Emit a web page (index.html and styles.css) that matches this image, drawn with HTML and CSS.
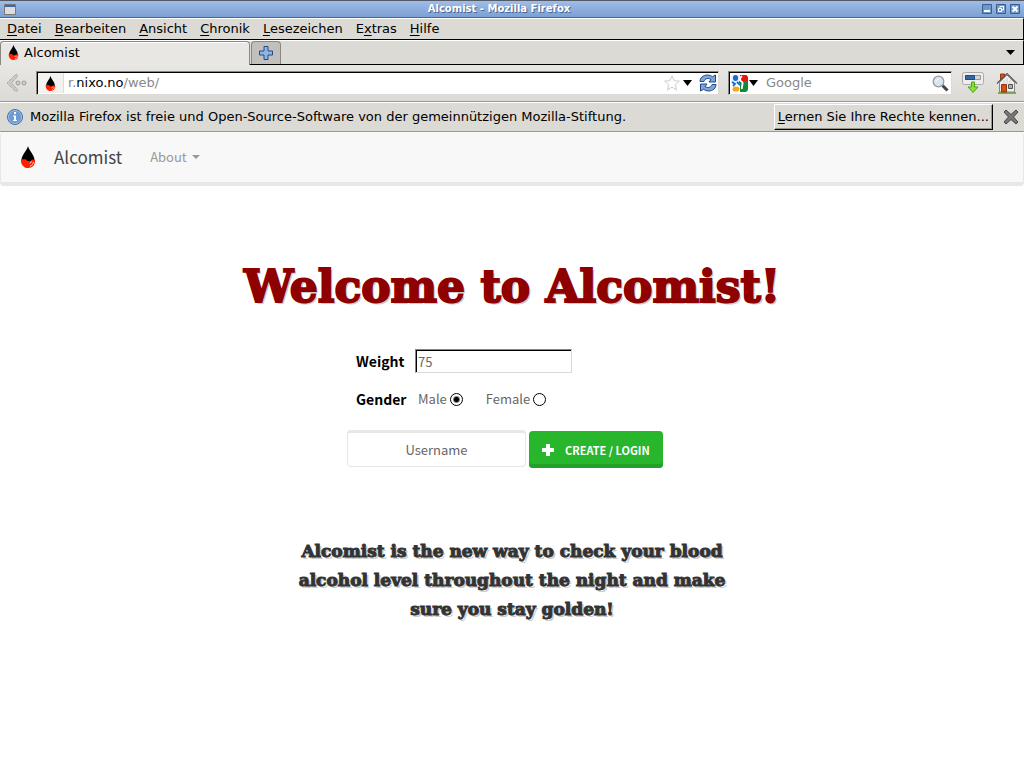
FILE: index.html
```html
<!DOCTYPE html>
<html lang="de">
<head>
<meta charset="utf-8">
<title>Alcomist</title>
<link rel="stylesheet" href="styles.css">
</head>
<body>
<svg class="defs" width="0" height="0" aria-hidden="true">
  <symbol id="drop" viewBox="0 0 16 22">
    <path d="M8 0C7 4.500 2 8.500 1.500 13.500L3 16h10l1.500-2.500C14 8.500 9 4.500 8 0Z" fill="#000"/>
    <path d="M1 13.200h4.500l2 1.800h3l1.500-1.500 3 .5c.5 4.500-2.500 8-7 8s-7.500-3.800-7-8.800Z" fill="#ff1e00"/>
    <path d="M13.500 16c-.5 2-1.500 3.500-3.500 4.300M11.500 15.500l-1.500 2" stroke="#fff" stroke-width=".9" fill="none"/>
  </symbol>
</svg>
<div class="window">
  <header class="titlebar">
    <svg class="app-icon" width="12" height="11" viewBox="0 0 12 11"><path d="M.5.5h11v10H.5z" fill="#ddd" stroke="#777"/><path d="M1 1h10v2H1z" fill="#3869b5"/></svg>
    <span class="window-title">Alcomist - Mozilla Firefox</span>
    <div class="window-buttons">
      <button aria-label="Minimieren"><svg width="10" height="10" viewBox="0 0 10 10"><path d="M.5.5h9v9h-9z" fill="#6f97cc" stroke="#365f96"/><path d="M2 6h6v2H2z" fill="#fff"/></svg></button>
      <button aria-label="Wiederherstellen"><svg width="10" height="10" viewBox="0 0 10 10"><path d="M.5.5h9v9h-9z" fill="#6f97cc" stroke="#365f96"/><path d="M4 4V2.500h3.500V6H6M2.500 4.500h3v3h-3z" stroke="#fff" fill="none"/></svg></button>
      <button aria-label="Schließen"><svg width="10" height="10" viewBox="0 0 10 10"><path d="M.5.5h9v9h-9z" fill="#6f97cc" stroke="#365f96"/><path d="m2.500 2.500 5 5m0-5-5 5" stroke="#fff" stroke-width="2"/></svg></button>
    </div>
  </header>
  <nav class="menubar">
    <button><u>D</u>atei</button><button><u>B</u>earbeiten</button><button><u>A</u>nsicht</button><button><u>C</u>hronik</button><button><u>L</u>esezeichen</button><button>E<u>x</u>tras</button><button><u>H</u>ilfe</button>
  </nav>
  <div class="tabbar">
    <button class="tab"><svg width="11" height="15" viewBox="0 0 16 22"><use href="#drop"/></svg>Alcomist</button>
    <button class="new-tab" aria-label="Neuer Tab"><svg width="14" height="14" viewBox="0 0 14 14"><path d="M5 .5h4V5h4.500v4H9v4.500H5V9H.5V5H5Z" fill="#8db4e2" stroke="#204a87"/></svg></button>
    <button class="all-tabs" aria-label="Alle Tabs"><svg width="9" height="5" viewBox="0 0 9 5"><path d="M0 0h9L4.500 5Z"/></svg></button>
  </div>
  <div class="toolbar">
    <button class="back" aria-label="Zurück"><svg width="21" height="20" viewBox="0 0 21 20"><path d="m10 1 2 2-6.500 7 6.500 7-2 2-9-9Z" fill="#c9c9c5" stroke="#949490" stroke-dasharray="1 1"/><circle cx="12" cy="10" r="2" fill="#d2d2ce" stroke="#999"/><circle cx="18" cy="10" r="2" fill="#d2d2ce" stroke="#999"/></svg></button>
    <div class="field address">
      <span class="site-icon"><svg width="11" height="15" viewBox="0 0 16 22"><use href="#drop"/></svg></span>
      <a class="url" href="#">r.<b>nixo.no</b>/web/</a>
      <svg width="16" height="16" viewBox="0 0 16 16"><path d="m8 .8 2.100 4.900 5.300.5-4 3.500 1.200 5.300L8 12.200 3.400 15l1.200-5.300-4-3.500 5.300-.5Z" fill="#fff" stroke="#ccc"/></svg>
      <svg class="star-menu" width="9" height="6" viewBox="0 0 9 6"><path d="M0 0h9L4.500 6Z"/></svg>
      <svg class="reload" width="18" height="18" viewBox="0 0 18 18"><path d="M1 7.500C1 4 4 1 8.500 1c2 0 3.500.7 4.800 1.800L16.500 1v7H10l2-2.500C9 3.500 6 4.500 5 7.500ZM17 10.500c0 3.500-3 6.500-7.500 6.500-2 0-3.500-.7-4.800-1.800L1.500 17v-7H8l-2 2.500c3 2 6 1 7-2Z" fill="#7fa6d8" stroke="#204a87"/></svg>
    </div>
    <div class="field search">
      <svg width="17" height="17" viewBox="0 0 17 17"><path d="M9 0h6.500L17 2v6H9Z" fill="#e11"/><path d="M0 0h9v8H0Z" fill="#e9f0fa"/><path d="M8 6h9v9l-2 2H8Z" fill="#128a3c"/><path d="M0 8h9v9H2l-2-2Z" fill="#fff"/><ellipse cx="4.500" cy="3" rx="2.600" ry="3" fill="#1769d2"/><path d="m1 7 3 2-2 2M6 7l3 3" stroke="#1769d2" stroke-width="1.800" fill="none"/><ellipse cx="5" cy="14" rx="3.500" ry="2.600" fill="#f6a51a"/><path d="M11 1c-3 2-2 5 0 6s-1 4 0 7" stroke="#fff" stroke-width="1.800" fill="none"/></svg>
      <svg class="engine-menu" width="9" height="6" viewBox="0 0 9 6"><path d="M0 0h9L4.500 6Z"/></svg>
      <input type="text" placeholder="Google" aria-label="Suche">
      <svg width="17" height="17" viewBox="0 0 17 17"><path d="m10.500 10.500 5 5" stroke="#444" stroke-width="3"/><circle cx="6.500" cy="6.500" r="5.300" fill="#d5e5f3" stroke="#999" stroke-width="1.300"/><path d="M4 7c0-2 1-3 3-3" stroke="#fff" fill="none"/></svg>
    </div>
    <button class="downloads" aria-label="Downloads"><svg width="22" height="22" viewBox="0 0 22 22"><rect x=".5" y=".5" width="21" height="12" rx="2" fill="#eeeeec" stroke="#aaa"/><path d="M3.500 3.500h15v4h-15Z" fill="#d3d7cf" stroke="#999"/><path d="M3.500 3.500h9v4h-9Z" fill="#3465a4" stroke="#204a87"/><path d="M9.500 10h3v5h3.500l-5 5.500L6 15h3.500Z" fill="#8ae234" stroke="#4fa512"/></svg></button>
    <button class="home" aria-label="Startseite"><svg width="22" height="22" viewBox="0 0 22 22"><path d="M2 21h18" stroke="#73b52c" stroke-width="2"/><path d="M4.500 2h4v6h-4Z" fill="#d55319" stroke="#8f3514"/><path d="M3.500 10.500 11 3l7.500 7.500v9.500h-15Z" fill="#eeeeec" stroke="#888"/><path d="M8 8v4m3-6v6m3-4v4" stroke="#ccc"/><path d="m1 11.500 10-10 10 10" fill="none" stroke="#555" stroke-width="1.200"/><path d="M5.500 12.500h5V20h-5Z" fill="#dc4c13" stroke="#8f3514"/><path d="M12.500 12.500h4v4h-4Z" fill="#aaa" stroke="#555"/></svg></button>
  </div>
  <div class="notice">
    <svg width="16" height="16" viewBox="0 0 16 16"><circle cx="8" cy="8" r="7.500" fill="#6c9bd3" stroke="#4470aa"/><circle cx="8" cy="8" r="6.500" fill="none" stroke="#9dbde4"/><path d="M7 3h2v2H7ZM6 6.500h3V11h1v1H6v-1h1V7.500H6Z" fill="#fff"/></svg>
    <span class="notice-text">Mozilla Firefox ist freie und Open-Source-Software von der gemeinnützigen Mozilla-Stiftung.</span>
    <button class="rights"><u>L</u>ernen Sie Ihre Rechte kennen...</button>
    <button class="dismiss" aria-label="Schließen"><svg width="16" height="16" viewBox="0 0 16 16"><path d="m3 1 5 4.500L13 1l2 2-4.500 5 4.500 5-2 2-5-4.500L3 15l-2-2 4.500-5L1 3Z" fill="#777" stroke="#444"/></svg></button>
  </div>
</div>
<nav class="navbar">
  <a class="brand" href="#"><svg width="16" height="22" viewBox="0 0 16 22"><use href="#drop"/></svg>Alcomist</a>
  <a class="about" href="#">About<svg width="8" height="4" viewBox="0 0 8 4"><path d="M0 0h8L4 4Z" fill="currentColor"/></svg></a>
</nav>
<main class="page">
  <h1>Welcome to Alcomist!</h1>
  <form class="signup">
    <div class="row"><label class="caption" for="weight">Weight</label><input class="weight" id="weight" type="text" value="75"></div>
    <div class="row gender-row"><span class="caption">Gender</span>
      <label class="choice">Male<input type="radio" name="gender" checked></label>
      <label class="choice">Female<input type="radio" name="gender"></label>
    </div>
    <div class="login"><input class="username" type="text" placeholder="Username" aria-label="Username"><button class="create" type="button"><svg width="12" height="12" viewBox="0 0 12 12"><path d="M4 0h4v4h4v4H8v4H4V8H0V4h4Z" fill="#fff"/></svg>CREATE / LOGIN</button></div>
  </form>
  <p class="tagline">Alcomist is the new way to check your blood alcohol level throughout the night and make sure you stay golden!</p>
</main>
</body>
</html>
```
FILE: styles.css
```css
* { box-sizing: border-box; }
body { margin: 0; background: #fff; font: 13px/20px "Noto Sans CJK JP", "Open Sans", sans-serif; color: #666; }
button { border: 0; margin: 0; padding: 0; background: none; font: inherit; color: inherit; }
input { font: inherit; margin: 0; }
a { color: inherit; text-decoration: none; }
svg { display: block; flex: none; }
.defs { position: absolute; }

/* browser window */
.window { font: 13px/18px "DejaVu Sans", sans-serif; color: #000; }
.window u { text-underline-offset: 2px; }
.titlebar { display: flex; align-items: center; height: 18px; padding: 0 4px; border-top: 1px solid #555b66; border-bottom: 1px solid #4268a4; background: linear-gradient(#9fbde8, #7ba0d2); }
.window-title { flex: 1; text-align: center; font-size: 10px; line-height: 14px; font-weight: bold; color: #fff; text-shadow: 1px 1px 0 #4a658f; }
.window-buttons { display: flex; gap: 4px; }
.menubar { display: flex; align-items: center; gap: 13px; height: 22px; padding: 0 7px; background: #dcdad5; border-top: 1px solid #fff; border-bottom: 1px solid #000; border-right: 1px solid #000; }
.tabbar { display: flex; align-items: flex-end; height: 25px; background: #dcdad5; border-top: 1px solid #fff; border-bottom: 1px solid #000; border-right: 1px solid #000; }
.tab { display: flex; align-items: center; gap: 5px; flex: 0 0 250px; height: 24px; padding: 0 8px 2px 7px; margin-bottom: -1px; background: #e8e7e4; border: 1px solid #888780; border-bottom: 0; border-radius: 4px 4px 0 0; box-shadow: inset 0 1px #fff; }
.new-tab { display: grid; place-items: center; width: 30px; height: 23px; margin-left: 1px; background: #c2c0bd; border: 1px solid #888780; border-bottom: 0; border-radius: 4px 4px 0 0; }
.all-tabs { align-self: center; margin-left: auto; padding-right: 8px; }
.toolbar { display: flex; align-items: center; height: 37px; padding: 0 6px; background: linear-gradient(#e8e7e4, #dcdad5); border-bottom: 1px solid #9c988c; }
.field { display: flex; align-items: center; height: 24px; background: #fff; border: 1px solid; border-color: #888780 #dcdad5 #dcdad5 #888780; box-shadow: inset 1px 1px #000; }
.address { flex: 1; margin: 0 9px; padding-right: 1px; }
.site-icon { display: grid; place-items: center; width: 26px; height: 20px; margin-left: 1px; background: #f2f2f0; border-right: 1px solid #ddd; }
.url { flex: 1; padding-left: 4px; color: #888; }
.url b { font-weight: normal; color: #000; }
.star-menu { margin: 0 7px 0 3px; }
.search { flex: 0 0 224px; min-width: 0; padding: 0 2px; }
.engine-menu { margin: 0 8px 0 1px; }
.search input { flex: 1; min-width: 0; border: 0; padding: 0; outline: 0; background: none; }
.search input::placeholder { color: #888; opacity: 1; }
.downloads { margin: 0 12px 0 10px; }
.notice { display: flex; align-items: center; height: 30px; padding: 0 5px 0 7px; background: #dcdad5; border-top: 1px solid #fff; border-bottom: 1px solid #9c988c; }
.notice-text { flex: 1; padding-left: 7px; }
.rights { height: 26px; padding: 0 3px; border: 1px solid; border-color: #fff #000 #000 #fff; box-shadow: inset -1px -1px #9c988c; }
.dismiss { margin-left: 10px; }

/* site navigation */
.navbar { display: flex; align-items: center; height: 54px; padding: 0 19px; background: #f8f8f8; border: 1px solid #e7e7e7; border-width: 0 1px 4px; border-radius: 4px; }
.brand { display: flex; align-items: center; gap: 18px; font-size: 17px; color: #444; }
.about { display: flex; align-items: center; gap: 5px; margin-left: 28px; color: #999; }

/* landing page */
.page { padding: 71px 16px 0; }
h1 { margin: 0; text-align: center; font: bold 44px/60px "DejaVu Serif", serif; color: #8f0000; -webkit-text-stroke: 2px #8f0000; text-shadow: 2px 2px 0 #ccc; }
.signup { width: 330px; margin: 32px auto 0; }
.row { display: flex; align-items: center; padding-left: 9px; }
.caption { width: 59px; color: #000; font-size: 14px; font-weight: bold; }
.weight { width: 157px; height: 24px; padding: 0 2px; color: #666; background: #fff; border: 1px solid; border-color: #888780 #dcdad5 #dcdad5 #888780; border-radius: 0; box-shadow: inset 1px 1px #000; }
.gender-row { margin-top: 16px; }
.gender-row .caption { width: 62px; }
.choice { display: flex; align-items: center; gap: 3px; margin-right: 23px; }
.choice input { appearance: none; width: 13px; height: 13px; border: 1px solid #000; border-radius: 50%; }
.choice input:checked { background: radial-gradient(circle, #000 2px, #fff 4px); }
.login { display: flex; gap: 3px; margin-top: 21px; }
.username { width: 179px; height: 37px; padding: 0 12px; text-align: center; border: 1px solid #e7e7e7; border-top-width: 3px; border-radius: 4px; }
.username::placeholder { color: #666; opacity: 1; }
.create { display: flex; align-items: center; gap: 11px; height: 37px; margin-top: 1px; padding: 0 13px; white-space: nowrap; font-size: 11px; font-weight: bold; color: #fff; background: #28b62c; box-shadow: inset 0 -4px #23a127; border-radius: 4px; }
.tagline { max-width: 460px; margin: 69px auto 0; text-align: center; font: bold 17px/29px "DejaVu Serif", serif; color: #333; -webkit-text-stroke: 1px #333; text-shadow: 2px 2px 0 #ccc; }
```
